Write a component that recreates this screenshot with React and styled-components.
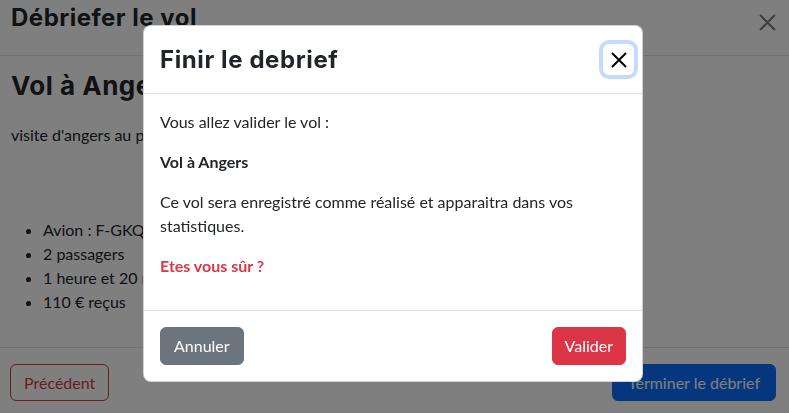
import React from 'react';
import styled, { createGlobalStyle } from 'styled-components';

const Global = createGlobalStyle`
  html, body { margin: 0; padding: 0; }
  body {
    font-family: "Lato", "Liberation Sans", sans-serif;
    font-size: 16px;
    line-height: 24px;
    color: #212529;
    background: #fff;
  }
  * { box-sizing: border-box; }
`;

const headingFont = `"Inter", "Liberation Sans", sans-serif`;

const Page = styled.div`
  height: 100vh;
  display: flex;
  flex-direction: column;
`;

const PageHeader = styled.header`
  height: 56px;
  flex-shrink: 0;
  border-bottom: 1px solid #dee2e6;
  display: flex;
  align-items: flex-start;
  justify-content: space-between;
  padding: 4px 13px 0 11px;
`;

const PageTitle = styled.h5`
  margin: 0;
  font-family: ${headingFont};
  font-weight: 700;
  font-size: 24px;
  line-height: 28px;
  letter-spacing: 0.5px;
`;

const IconButton = styled.button`
  border: none;
  background: transparent;
  padding: 0;
  display: flex;
  align-items: center;
  justify-content: center;
  cursor: pointer;
`;

const PageClose = styled(IconButton)`
  width: 18px;
  height: 18px;
  margin-top: 9px;
  color: #000;
  opacity: 0.5;
`;

const PageBody = styled.main`
  flex: 1;
  padding: 0 11px;
`;

const FlightTitle = styled.h2`
  margin: 15px 0 22px;
  font-family: ${headingFont};
  font-weight: 700;
  font-size: 26px;
  line-height: 30px;
  letter-spacing: 0.5px;
`;

const Paragraph = styled.p`
  margin: 0;
`;

const Details = styled.ul`
  margin: 71px 0 0;
  padding-left: 32px;
`;

const PageFooter = styled.footer`
  flex-shrink: 0;
  border-top: 1px solid #dee2e6;
  padding: 16px 13px 12px 10px;
  display: flex;
  justify-content: space-between;
`;

const Button = styled.button`
  font-family: inherit;
  font-size: 16px;
  line-height: ${p => (p.$tall ? '24px' : '23px')};
  padding: 6px ${p => p.$px || 12}px;
  border-radius: 6px;
  border: 1px solid ${p => p.$color};
  background: ${p => (p.$outline ? 'transparent' : p.$color)};
  color: ${p => (p.$outline ? p.$color : '#fff')};
  cursor: pointer;
`;

const Backdrop = styled.div`
  position: fixed;
  inset: 0;
  background: rgba(0, 0, 0, 0.5);
  display: flex;
  justify-content: center;
  align-items: flex-start;
  padding: 25px 3px 0 0;
`;

const Dialog = styled.div`
  width: 500px;
  background: #fff;
  border: 1px solid rgba(0, 0, 0, 0.175);
  border-radius: 8px;
`;

const DialogHeader = styled.div`
  height: 68px;
  padding: 16px;
  border-bottom: 1px solid #dee2e6;
  display: flex;
  align-items: center;
  justify-content: space-between;
`;

const DialogTitle = styled.h5`
  margin: 0;
  font-family: ${headingFont};
  font-weight: 700;
  font-size: 24px;
  line-height: 29px;
  letter-spacing: 0.6px;
  color: #212529;
`;

const DialogClose = styled(IconButton)`
  width: 31px;
  height: 31px;
  margin-right: -8px;
  border-radius: 6px;
  color: #000;
  box-shadow: 0 0 0 4px rgba(13, 110, 253, 0.25);
`;

const DialogBody = styled.div`
  padding: 16px;
`;

const BodyText = styled.p`
  margin: 0 0 16px;
  font-weight: ${p => (p.$bold ? 700 : 400)};
  color: ${p => p.$color || '#212529'};
`;

const DialogFooter = styled.div`
  padding: 12px;
  border-top: 1px solid #dee2e6;
  display: flex;
  justify-content: space-between;
  & > * { margin: 4px; }
`;

const CloseIcon = ({ size = 16, stroke = 2 }) => (
  <svg width={size} height={size} viewBox="0 0 16 16" fill="none">
    <path d="M1 1L15 15M15 1L1 15" stroke="currentColor" strokeWidth={stroke} strokeLinecap="butt" />
  </svg>
);

export default function App() {
  return (
    <>
      <Global />
      <Page>
        <PageHeader>
          <PageTitle>Débriefer le vol</PageTitle>
          <PageClose aria-label="Fermer">
            <CloseIcon size={17} stroke={2} />
          </PageClose>
        </PageHeader>
        <PageBody>
          <FlightTitle>Vol à Angers</FlightTitle>
          <Paragraph>visite d'angers au passage</Paragraph>
          <Details>
            <li>Avion : F-GKQA</li>
            <li>2 passagers</li>
            <li>1 heure et 20 minutes de vol</li>
            <li>110 € reçus</li>
          </Details>
        </PageBody>
        <PageFooter>
          <Button $outline $px={13} $color="#dc3545">Précédent</Button>
          <Button $px={15} $color="#0d6efd">Terminer le débrief</Button>
        </PageFooter>
      </Page>
      <Backdrop>
        <Dialog role="dialog">
          <DialogHeader>
            <DialogTitle>Finir le debrief</DialogTitle>
            <DialogClose aria-label="Fermer">
              <CloseIcon size={16} stroke={2} />
            </DialogClose>
          </DialogHeader>
          <DialogBody>
            <BodyText>Vous allez valider le vol :</BodyText>
            <BodyText $bold>Vol à Angers</BodyText>
            <BodyText>Ce vol sera enregistré comme réalisé et apparaitra dans vos statistiques.</BodyText>
            <BodyText $bold $color="#dc3545">Etes vous sûr ?</BodyText>
          </DialogBody>
          <DialogFooter>
            <Button $tall $px={13} $color="#6c757d">Annuler</Button>
            <Button $tall $color="#dc3545">Valider</Button>
          </DialogFooter>
        </Dialog>
      </Backdrop>
    </>
  );
}
